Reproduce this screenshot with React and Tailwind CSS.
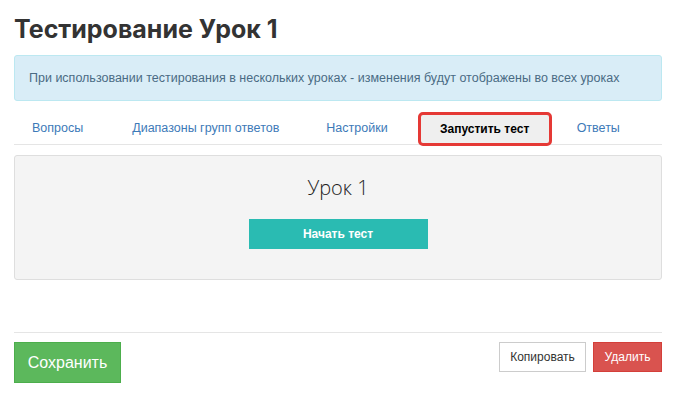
import React from "react";

const tabs = [
    { label: "Вопросы", cls: "ml-[18px] mr-[49px]" },
    { label: "Диапазоны групп ответов", cls: "mr-[47px]" },
    { label: "Настройки", cls: "mr-[30px]" },
    { label: "Запустить тест", cls: "mr-[25px]", active: true },
    { label: "Ответы", cls: "" },
];

function App() {
    return (
        <div className="w-[676px] h-[400px] bg-white px-[14px] pt-[12px] text-[#333]" style={{ fontFamily: "'Liberation Sans', Arial, sans-serif" }}>
            {/* Заголовок */}
            <h1 className="text-[25px] font-bold leading-[34px] text-[#333]" style={{ fontFamily: "Inter, 'Liberation Sans', sans-serif" }}>
                Тестирование Урок 1
            </h1>

            {/* Предупреждение */}
            <div className="mt-[9px] h-[46px] flex items-center px-[14px] bg-[#d9edf7] border border-[#bce8f1] rounded-[3px] text-[12.5px] text-[#4a6b84] whitespace-nowrap">
                При использовании тестирования в нескольких уроках - изменения будут отображены во всех уроках
            </div>

            {/* Вкладки */}
            <div className="mt-[12px] h-[32px] flex items-center border-b border-[#e5e5e5] text-[12.5px] whitespace-nowrap">
                {tabs.map((tab) => (
                    <div key={tab.label} className={tab.cls}>
                        {tab.active ? (
                            <div className="h-[34px] w-[134px] flex items-center justify-center bg-[#efefef] border-[3px] border-[#e53935] rounded-[5px] font-bold text-[12px] text-black">
                                {tab.label}
                            </div>
                        ) : (
                            <span className="text-[#3d7ab8]">{tab.label}</span>
                        )}
                    </div>
                ))}
            </div>

            {/* Панель запуска */}
            <div className="mt-[10px] h-[125px] bg-[#f4f4f4] border border-[#dedede] rounded-[3px] flex flex-col items-center">
                <div className="mt-[17px] text-[20px] font-light text-[#222]" style={{ fontFamily: "'Open Sans', sans-serif" }}>
                    Урок 1
                </div>
                <button className="mt-[16px] w-[179px] h-[30px] bg-[#2abbb2] text-white text-[12px] font-bold">
                    Начать тест
                </button>
            </div>

            {/* Нижняя панель */}
            <div className="mt-[52px] border-t border-[#e5e5e5] pt-[9px] flex justify-between items-start">
                <button className="w-[107px] h-[41px] bg-[#5cb85c] border border-[#4cae4c] text-white text-[16px]">
                    Сохранить
                </button>
                <div className="flex gap-[7px]">
                    <button className="w-[87px] h-[30px] bg-white border border-[#ccc] text-[12px] text-[#333]">
                        Копировать
                    </button>
                    <button className="w-[69px] h-[30px] bg-[#d9534f] border border-[#d43f3a] text-[12px] text-white">
                        Удалить
                    </button>
                </div>
            </div>
        </div>
    );
}

export default App;
